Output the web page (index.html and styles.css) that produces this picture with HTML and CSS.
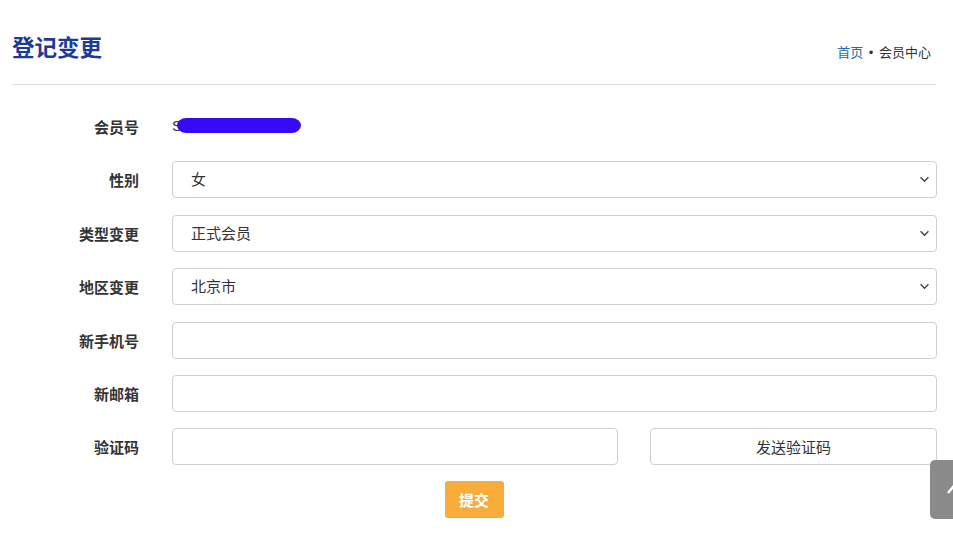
FILE: index.html
```html
<!DOCTYPE html>
<html lang="zh-CN">
  <head>
    <meta charset="UTF-8" />
    <meta name="viewport" content="width=device-width, initial-scale=1.0" />
    <title>登记变更</title>
    <link rel="stylesheet" href="styles.css">
  </head>
  <body>
    <div class="container">
      <div class="page-header">
        <h2>登记变更</h2>
        <div class="crumbs">
          <a href="#">首页</a>
          <span class="dot">•</span>
          <span>会员中心</span>
        </div>
      </div>

      <form class="change-form">
        <label>会员号</label>
        <div class="static">S<span class="mask"></span></div>

        <label for="sex">性别</label>
        <select id="sex">
          <option>女</option>
          <option>男</option>
        </select>

        <label for="type">类型变更</label>
        <select id="type">
          <option>正式会员</option>
        </select>

        <label for="region">地区变更</label>
        <select id="region">
          <option>北京市</option>
        </select>

        <label for="phone">新手机号</label>
        <input type="text" id="phone" />

        <label for="email">新邮箱</label>
        <input type="text" id="email" />

        <label for="code">验证码</label>
        <div class="code-row">
          <input type="text" id="code" />
          <button type="button" class="send-btn">发送验证码</button>
        </div>
      </form>

      <div class="submit-row">
        <button type="submit" class="submit-btn">提交</button>
      </div>
    </div>

    <a href="#" class="to-top">
      <svg width="16" height="16" viewBox="0 0 16 16"><path d="M3 11 L8 5 L13 11" fill="none" stroke="#fff" stroke-width="2.5" /></svg>
    </a>
  </body>
</html>
```

FILE: styles.css
```css
/* Global */
body {
  margin: 0;
  font-family: "Liberation Sans", "Noto Sans CJK SC", sans-serif;
  color: #333;
  background: #fff;
}
.container {
  margin-left: 12px;
  width: 924px;
}
/* Header */
.page-header {
  display: flex;
  justify-content: space-between;
  align-items: flex-end;
  padding: 36px 5px 22px 0;
  border-bottom: 1px solid #dedede;
}
h2 {
  margin: 0;
  font-size: 22.5px;
  line-height: 26px;
  color: #1c3b97;
}
.crumbs {
  font-size: 13px;
  line-height: 18px;
  color: #333;
}
.crumbs a {
  color: #2468b0;
  text-decoration: none;
}
.crumbs .dot {
  margin: 0 2px;
}
/* Form */
.change-form {
  display: grid;
  grid-template-columns: 127px 765px;
  grid-auto-rows: 37px;
  column-gap: 33px;
  row-gap: 16.4px;
  margin-top: 23px;
  align-items: center;
}
.change-form label {
  text-align: right;
  font-size: 15px;
  font-weight: bold;
  color: #333;
}
.static {
  font-size: 15px;
  display: flex;
  align-items: center;
  margin-top: -3px;
}
.mask {
  display: inline-block;
  width: 124px;
  height: 15px;
  margin-left: -5px;
  border-radius: 10px / 8px;
  background: #3609f6;
}
select,
input[type="text"] {
  box-sizing: border-box;
  width: 100%;
  height: 37px;
  margin: 0;
  padding: 0 18px;
  border: 1px solid #cfcfcf;
  border-radius: 4px;
  font-family: inherit;
  font-size: 15px;
  color: #333;
  background-color: #fff;
}
select {
  appearance: none;
  -webkit-appearance: none;
  background-image: url("data:image/svg+xml,%3Csvg xmlns='http://www.w3.org/2000/svg' width='12' height='8' viewBox='0 0 12 8'%3E%3Cpath d='M1.5 1.5 L6 6 L10.5 1.5' fill='none' stroke='%23444' stroke-width='1.6'/%3E%3C/svg%3E");
  background-repeat: no-repeat;
  background-position: right 6px center;
  background-size: 11px 7px;
}
.code-row {
  display: grid;
  grid-template-columns: 446px 1fr;
  column-gap: 32px;
  height: 37px;
}
.send-btn {
  height: 37px;
  border: 1px solid #cfcfcf;
  border-radius: 4px;
  background: #fff;
  font-family: inherit;
  font-size: 15px;
  color: #333;
}
/* Submit */
.submit-row {
  display: flex;
  justify-content: center;
  margin-top: 16px;
}
.submit-btn {
  width: 59px;
  height: 37px;
  border: none;
  border-radius: 3px;
  background: #f8ac3a;
  color: #fff;
  font-family: inherit;
  font-size: 15px;
  font-weight: bold;
}
/* Back to top */
.to-top {
  position: fixed;
  left: 930px;
  top: 460px;
  width: 45px;
  height: 59px;
  border-radius: 5px;
  background: #8a8a8a;
  display: flex;
  align-items: center;
  justify-content: center;
}
```
